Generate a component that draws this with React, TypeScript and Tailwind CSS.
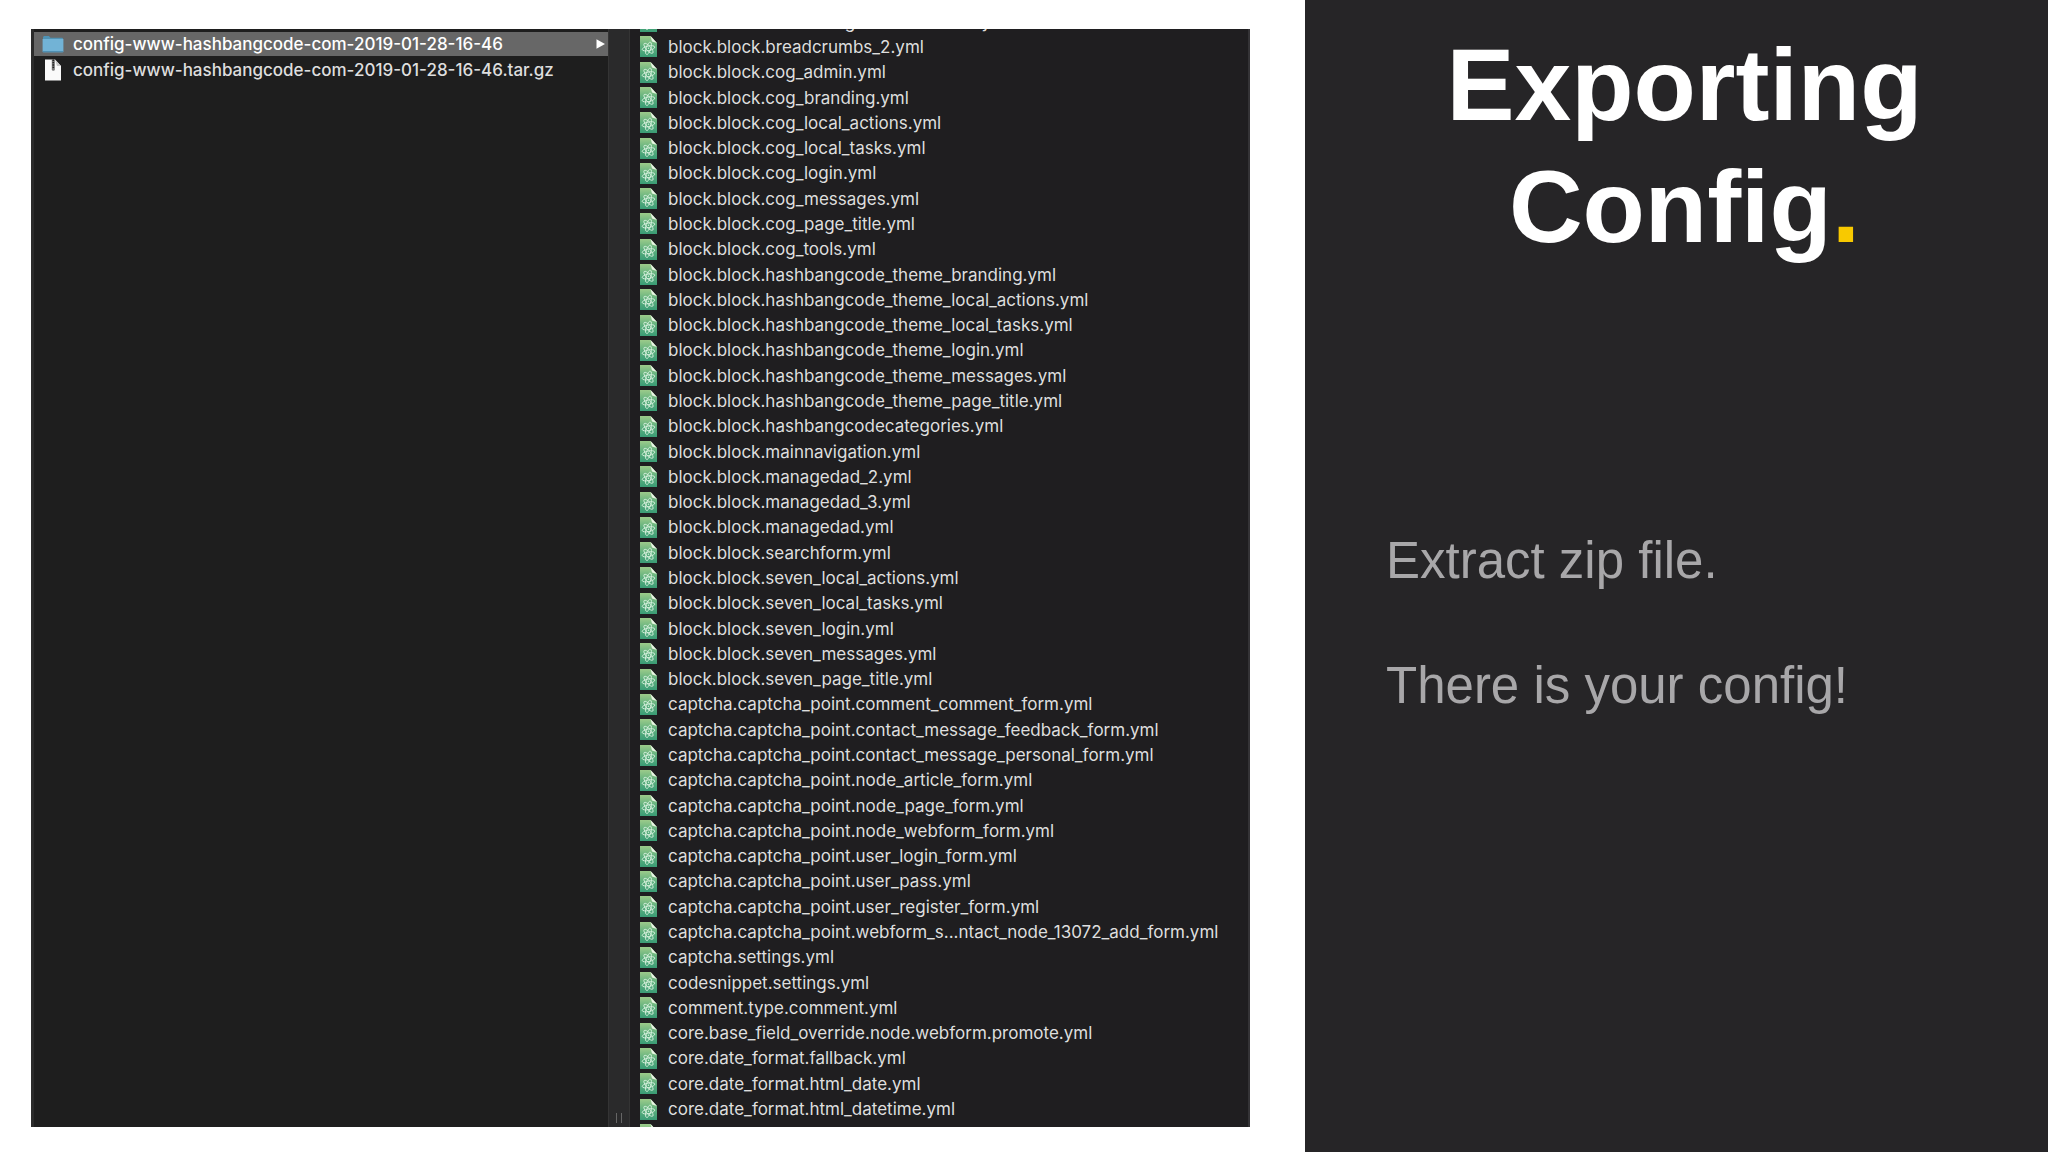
const FILES = [
  'block.block.asbrandinglocalactionsbar.yml',
  'block.block.breadcrumbs_2.yml',
  'block.block.cog_admin.yml',
  'block.block.cog_branding.yml',
  'block.block.cog_local_actions.yml',
  'block.block.cog_local_tasks.yml',
  'block.block.cog_login.yml',
  'block.block.cog_messages.yml',
  'block.block.cog_page_title.yml',
  'block.block.cog_tools.yml',
  'block.block.hashbangcode_theme_branding.yml',
  'block.block.hashbangcode_theme_local_actions.yml',
  'block.block.hashbangcode_theme_local_tasks.yml',
  'block.block.hashbangcode_theme_login.yml',
  'block.block.hashbangcode_theme_messages.yml',
  'block.block.hashbangcode_theme_page_title.yml',
  'block.block.hashbangcodecategories.yml',
  'block.block.mainnavigation.yml',
  'block.block.managedad_2.yml',
  'block.block.managedad_3.yml',
  'block.block.managedad.yml',
  'block.block.searchform.yml',
  'block.block.seven_local_actions.yml',
  'block.block.seven_local_tasks.yml',
  'block.block.seven_login.yml',
  'block.block.seven_messages.yml',
  'block.block.seven_page_title.yml',
  'captcha.captcha_point.comment_comment_form.yml',
  'captcha.captcha_point.contact_message_feedback_form.yml',
  'captcha.captcha_point.contact_message_personal_form.yml',
  'captcha.captcha_point.node_article_form.yml',
  'captcha.captcha_point.node_page_form.yml',
  'captcha.captcha_point.node_webform_form.yml',
  'captcha.captcha_point.user_login_form.yml',
  'captcha.captcha_point.user_pass.yml',
  'captcha.captcha_point.user_register_form.yml',
  'captcha.captcha_point.webform_s...ntact_node_13072_add_form.yml',
  'captcha.settings.yml',
  'codesnippet.settings.yml',
  'comment.type.comment.yml',
  'core.base_field_override.node.webform.promote.yml',
  'core.date_format.fallback.yml',
  'core.date_format.html_date.yml',
  'core.date_format.html_datetime.yml',
  '',
];

const FolderIcon = () => (
  <svg viewBox="0 0 22 18" className="h-[18px] w-[22px] shrink-0" aria-hidden="true">
    <path d="M1 2.5Q1 1 2.3 1h4.6l1.6 1.8H20q1 0 1 1V8H1z" fill="#4f93b5" />
    <path d="M.6 4h20.8v12.2q0 1-1 1H1.6q-1 0-1-1z" fill="#72b3d6" />
    <path d="M.6 16h20.8v.4q0 .9-1 .9H1.6q-1 0-1-.9z" fill="#4f8fb2" />
  </svg>
);

const ArchiveIcon = () => (
  <svg viewBox="0 0 22 22" className="h-[22px] w-[22px] shrink-0" aria-hidden="true">
    <path d="M3 .5h10l6 6.5v14.5H3z" fill="#fafafa" />
    <path d="M13 .5L19 7h-4z" fill="#c9c9c9" />
    <path d="M9.8 .5h3v10q0 1.2-1.5 1.2t-1.5-1.2z" fill="#777" />
    <path d="M11.3 .5v9" stroke="#222" strokeWidth="1.6" strokeDasharray="1.4 1" />
  </svg>
);

// Page with the Atom mark: three crossed orbits and a nucleus
const AtomFileIcon = () => (
  <svg viewBox="0 0 17 21" className="h-[21px] w-[17px] shrink-0" aria-hidden="true">
    <path d="M0 0h10.5L17 7v14H0z" fill="url(#atomGreen)" />
    <path d="M10.5 0L17 7l-5-1.6z" fill="#e9f5e4" />
    <g fill="none" stroke="#d5f0dc" strokeWidth=".9">
      <ellipse cx="8.5" cy="12.3" rx="6.4" ry="2.3" transform="rotate(-12 8.5 12.3)" />
      <ellipse cx="8.5" cy="12.3" rx="6.4" ry="2.3" transform="rotate(48 8.5 12.3)" />
      <ellipse cx="8.5" cy="12.3" rx="6.4" ry="2.3" transform="rotate(108 8.5 12.3)" />
    </g>
    <circle cx="8.5" cy="12.3" r=".7" fill="#d5f0dc" />
  </svg>
);

const FolderColumn = () => (
  <ul className="bg-[#1e1e1e] pt-[3px] font-medium">
    <li className="flex h-6 items-center bg-[#676767] pr-[3px] pl-2 text-white">
      <FolderIcon />
      <span className="ml-[9px] grow">config-www-hashbangcode-com-2019-01-28-16-46</span>
      <svg viewBox="0 0 9 10" className="h-2.5 w-[9px]" aria-hidden="true">
        <path d="M.5.3L9 5 .5 9.7z" fill="#fff" />
      </svg>
    </li>
    <li className="flex h-7 items-center pl-2">
      <ArchiveIcon />
      <span className="ml-[9px]">config-www-hashbangcode-com-2019-01-28-16-46.tar.gz</span>
    </li>
  </ul>
);

const FileColumn = () => (
  <ul className="-mt-5 -mb-5 grid auto-rows-fr bg-[#1f1e20]">
    {FILES.map((name, i) => (
      <li key={i} className="flex min-h-0 items-center pl-2.5">
        <AtomFileIcon />
        <span className="ml-[11px] whitespace-nowrap">{name}</span>
      </li>
    ))}
  </ul>
);

export default function App() {
  return (
    <main className="grid h-screen grid-cols-[1305fr_743fr] overflow-hidden bg-white font-['Liberation_Sans',Arial,sans-serif]">
      <svg className="absolute h-0 w-0" aria-hidden="true">
        <linearGradient id="atomGreen" x1="0" y1="0" x2="0" y2="1">
          <stop offset="0" stopColor="#9ccb8a" />
          <stop offset=".5" stopColor="#5fb07e" />
          <stop offset="1" stopColor="#3a9c75" />
        </linearGradient>
      </svg>

      {/* Finder window */}
      <div className="min-h-0 pt-[29px] pr-[55px] pb-[25px] pl-[31px]">
        <section className="grid h-full grid-cols-[575fr_22px_619fr] overflow-hidden border-r-2 border-l-3 border-r-[#343336] border-l-[#2b2b2b] bg-[#1e1e1e] font-['Inter',sans-serif] text-[17px] leading-6 text-[#dedede]">
          <FolderColumn />
          <div className="flex items-end justify-center gap-1 border-x border-[#343434] bg-[#2a2a2b] pb-1">
            <span className="h-2.5 w-px bg-[#666]" />
            <span className="h-2.5 w-px bg-[#666]" />
          </div>
          <FileColumn />
        </section>
      </div>

      <aside className="bg-[#262527] pt-6 pr-16 pl-20">
        <h1 className="text-center text-[102px] leading-[122px] font-bold text-white">
          Exporting
          <br />
          Config<span className="text-[#f8c900]">.</span>
        </h1>
        <div className="mt-[230px] pl-px text-[51px] leading-[125px] text-[#a8a7a9]">
          <p>Extract zip file.</p>
          <p>There is your config!</p>
        </div>
      </aside>
    </main>
  );
}
